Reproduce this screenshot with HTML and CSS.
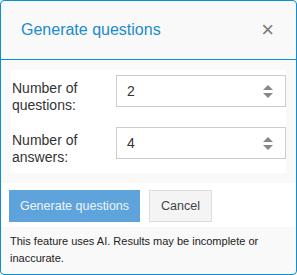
FILE: index.html
```html
<!DOCTYPE html>
<html lang="en">
<head>
    <meta charset="UTF-8">
    <meta name="viewport" content="width=device-width, initial-scale=1.0">
    <title>Generate questions</title>
    <link rel="stylesheet" href="styles.css">
</head>
<body>
    <div class="dialog">
        <div class="dialog-header">
            <h2>Generate questions</h2>
            <span class="close">&times;</span>
        </div>
        <div class="dialog-body">
            <div class="form-panel">
                <div class="form-row">
                    <label>Number of questions:</label>
                    <div class="spin">
                        <span class="value">2</span>
                        <span class="arrows"><i class="up"></i><i class="down"></i></span>
                    </div>
                </div>
                <div class="form-row">
                    <label>Number of answers:</label>
                    <div class="spin">
                        <span class="value">4</span>
                        <span class="arrows"><i class="up"></i><i class="down"></i></span>
                    </div>
                </div>
            </div>
        </div>
        <div class="dialog-actions">
            <button class="btn btn-primary">Generate questions</button>
            <button class="btn btn-default">Cancel</button>
        </div>
        <p class="note">This feature uses AI. Results may be incomplete or inaccurate.</p>
    </div>
</body>
</html>
```

FILE: styles.css
```css
html, body {
    margin: 0;
    padding: 0;
}
body {
    font-family: "Liberation Sans", Arial, sans-serif;
    background: #fff;
}
.dialog {
    box-sizing: border-box;
    width: 297px;
    height: 275px;
    border: 1px solid #0a8fd2;
    border-radius: 4px;
    background: #f9f9f9;
    overflow: hidden;
}
.dialog-header {
    height: 58px;
    border-bottom: 1px solid #0a8fd2;
    display: flex;
    align-items: center;
    justify-content: space-between;
    padding: 0 22px 0 20px;
}
.dialog-header h2 {
    margin: 0;
    font-size: 16px;
    font-weight: normal;
    color: #1a8bcc;
}
.close {
    color: #7a7a7a;
    font-size: 22px;
    line-height: 1;
}
.dialog-body {
    padding: 10px;
}
.form-panel {
    background: #fff;
    padding: 5px 0 14px 1px;
    display: flex;
    flex-direction: column;
    gap: 20px;
}
.form-row {
    display: flex;
    align-items: flex-start;
    height: 32px;
}
.form-row label {
    width: 90px;
    margin-top: 5px;
    margin-right: 14px;
    font-size: 14px;
    line-height: 17px;
    color: #333;
}
.spin {
    box-sizing: border-box;
    width: 170px;
    height: 32px;
    border: 1px solid #ccc;
    display: flex;
    align-items: center;
    justify-content: space-between;
    padding: 0 12px 0 10px;
    font-size: 14px;
    color: #333;
}
.arrows {
    display: flex;
    flex-direction: column;
    gap: 3px;
}
.arrows i {
    width: 0;
    height: 0;
    border-left: 5px solid transparent;
    border-right: 5px solid transparent;
}
.arrows .up {
    border-bottom: 5px solid #888;
}
.arrows .down {
    border-top: 5px solid #888;
}
.dialog-actions {
    background: #fff;
    padding: 7px 8px 5px 8px;
    display: flex;
    gap: 9px;
}
.btn {
    font-family: "Liberation Sans", Arial, sans-serif;
    font-size: 12.5px;
    height: 32px;
    padding: 0 6px;
    border-radius: 0;
    white-space: nowrap;
}
.btn-primary {
    background: #5fa3dd;
    border: 1px solid #5fa3dd;
    color: #eef5fb;
    width: 131px;
}
.btn-default {
    background: #f4f4f4;
    border: 1px solid #ddd;
    color: #444;
    width: 63px;
}
.note {
    margin: 0;
    padding: 6px 10px 0 9px;
    font-size: 11px;
    line-height: 17px;
    color: #222;
}
```
